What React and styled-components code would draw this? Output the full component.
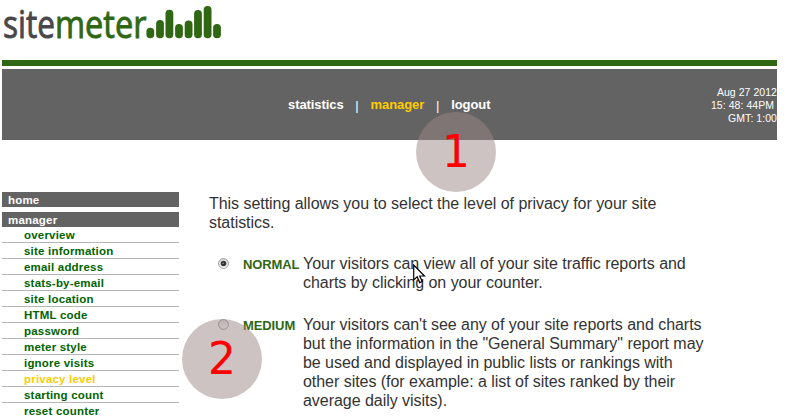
import React from "react";
import styled, { createGlobalStyle } from "styled-components";

const GlobalStyle = createGlobalStyle`
  * { box-sizing: border-box; }
  html, body { margin: 0; background: #fff; overflow: hidden; }
  body { font-family: "Liberation Sans", Arial, sans-serif; color: #333; }
`;

const Page = styled.div`
  position: relative;
  width: 787px;
  height: 418px;
  padding-left: 2px;
  overflow: hidden;
`;

const Logo = styled.svg`
  display: block;
  width: 230px;
  height: 60px;
  margin-left: -2px;
  font-family: "Open Sans", "Noto Sans", sans-serif;
  font-size: 38.5px;
`;

const GreenRule = styled.div`
  width: 775px;
  height: 6px;
  margin-bottom: 3px;
  background: #306713;
`;

const Header = styled.header`
  display: grid;
  grid-template-columns: 1fr auto;
  width: 775px;
  height: 71px;
  background: #636363;
  color: #fff;
`;

const Nav = styled.nav`
  display: flex;
  align-items: flex-start;
  padding: 28px 0 0 286px;
  font-size: 13px;
  line-height: 15px;
`;

const NavLink = styled.a`
  color: ${(p) => (p.$active ? "#ffcc00" : "#fff")};
  font-weight: bold;
  letter-spacing: -0.08px;
`;

const Divider = styled.span`
  width: 27px;
  padding-top: 1px;
  text-align: center;
`;

const Clock = styled.div`
  padding-top: 17px;
  font-size: 10.5px;
  line-height: 13px;
  letter-spacing: 0.05px;
  text-align: right;
  white-space: pre;
`;

const Body = styled.div`
  display: flex;
  align-items: flex-start;
  padding-top: 52px;
`;

const Sidebar = styled.aside`
  width: 177px;
  font-size: 11.5px;
  font-weight: bold;
  letter-spacing: 0.2px;
`;

const SideHeading = styled.div`
  height: 15px;
  margin-top: ${(p) => (p.$spaced ? "5px" : "0")};
  padding-left: 6px;
  background: #636363;
  color: #fff;
  line-height: 16px;
`;

const SideItem = styled.a`
  display: block;
  height: 16px;
  padding-left: 22px;
  border-bottom: 1px solid #b5b5b5;
  color: ${(p) => (p.$active ? "#ffcc00" : "#006400")};
  line-height: 16px;
`;

const Content = styled.main`
  width: 520px;
  padding: 2px 0 0 30px;
  font-size: 16px;
  line-height: 19px;
  letter-spacing: -0.04px;
  white-space: pre;
`;

const Intro = styled.p`
  margin: 0 0 22px;
`;

const Option = styled.label`
  display: grid;
  grid-template-columns: 34px 60px auto;
  margin-bottom: 23px;
`;

const OptionName = styled.strong`
  padding-top: 1px;
  color: #306713;
  font-size: 13px;
  letter-spacing: -0.1px;
`;

const Radio = styled.svg`
  width: 11px;
  height: 11px;
  margin: 4px 0 0 9px;
`;

const Marker = styled.div`
  position: absolute;
  left: ${(p) => p.$x}px;
  top: ${(p) => p.$y}px;
  display: flex;
  align-items: center;
  justify-content: center;
  width: 80px;
  height: 80px;
  border-radius: 50%;
  background: rgba(158, 136, 136, 0.5);
  color: #f00;
  font: 44px/80px "DejaVu Sans", sans-serif;
`;

const Cursor = styled.svg`
  position: absolute;
  left: 413px;
  top: 264px;
  width: 13px;
  height: 20px;
`;

const bars = [
  [150.3, 27.7], [160, 20], [169.4, 9.8], [179, 24],
  [188.6, 20.4], [198, 10], [207.6, 6], [217, 24],
];

const items = [
  "overview", "site information", "email address", "stats-by-email",
  "site location", "HTML code", "password", "meter style",
  "ignore visits", "privacy level", "starting count", "reset counter",
];

const options = [
  {
    name: "NORMAL",
    text: "Your visitors can view all of your site traffic reports and\ncharts by clicking on your counter.",
  },
  {
    name: "MEDIUM",
    text: 'Your visitors can\'t see any of your site reports and charts\nbut the information in the "General Summary" report may\nbe used and displayed in public lists or rankings with\nother sites (for example: a list of sites ranked by their\naverage daily visits).',
  },
];

function RadioButton({ checked }) {
  return (
    <Radio viewBox="0 0 11 11">
      <defs>
        <linearGradient id="radioFill" x1="0" y1="0" x2="0" y2="1">
          <stop offset="0" stopColor="#ddd" />
          <stop offset="1" stopColor="#fff" />
        </linearGradient>
      </defs>
      <circle cx="5.5" cy="5.5" r="4.9" fill="url(#radioFill)" stroke="#8b8b8b" strokeWidth="0.9" />
      {checked && <circle cx="5.5" cy="5.5" r="2.8" fill="#333" />}
      {checked && <circle cx="5.2" cy="5.2" r="0.8" fill="#999" />}
    </Radio>
  );
}

export default function App() {
  return (
    <Page>
      <GlobalStyle />
      <Logo viewBox="0 0 230 60">
        <text x="3" y="37.5" textLength="52" lengthAdjust="spacingAndGlyphs" fill="#48484a" stroke="#48484a" strokeWidth="0.9">site</text>
        <text x="55" y="37.5" textLength="91.5" lengthAdjust="spacingAndGlyphs" fill="#306713" stroke="#306713" strokeWidth="0.9">meter</text>
        {bars.map(([x, top]) => (
          <rect key={x} x={x - 3.9} y={top} width="7.8" height={38.3 - top} rx="3.8" fill="#306713" />
        ))}
      </Logo>
      <GreenRule />
      <Header>
        <Nav>
          <NavLink>statistics</NavLink>
          <Divider>|</Divider>
          <NavLink $active>manager</NavLink>
          <Divider>|</Divider>
          <NavLink>logout</NavLink>
        </Nav>
        <Clock>{"Aug 27 2012\n15: 48: 44PM \nGMT: 1:00"}</Clock>
      </Header>
      <Body>
        <Sidebar>
          <SideHeading>home</SideHeading>
          <SideHeading $spaced>manager</SideHeading>
          {items.map((item) => (
            <SideItem key={item} $active={item === "privacy level"}>{item}</SideItem>
          ))}
        </Sidebar>
        <Content>
          <Intro>{"This setting allows you to select the level of privacy for your site\nstatistics."}</Intro>
          {options.map((o, i) => (
            <Option key={o.name}>
              <RadioButton checked={i === 0} />
              <OptionName>{o.name}</OptionName>
              <span>{o.text}</span>
            </Option>
          ))}
        </Content>
      </Body>
      <Marker $x={416} $y={112}>1</Marker>
      <Marker $x={182} $y={319}>2</Marker>
      <Cursor viewBox="0 0 13 20">
        <path d="M.7 1v15l3.5-3.2 2.5 5.8 2.5-1.1-2.5-5.5h4.8z" fill="#fff" stroke="#000" strokeWidth="1.2" />
      </Cursor>
    </Page>
  );
}
